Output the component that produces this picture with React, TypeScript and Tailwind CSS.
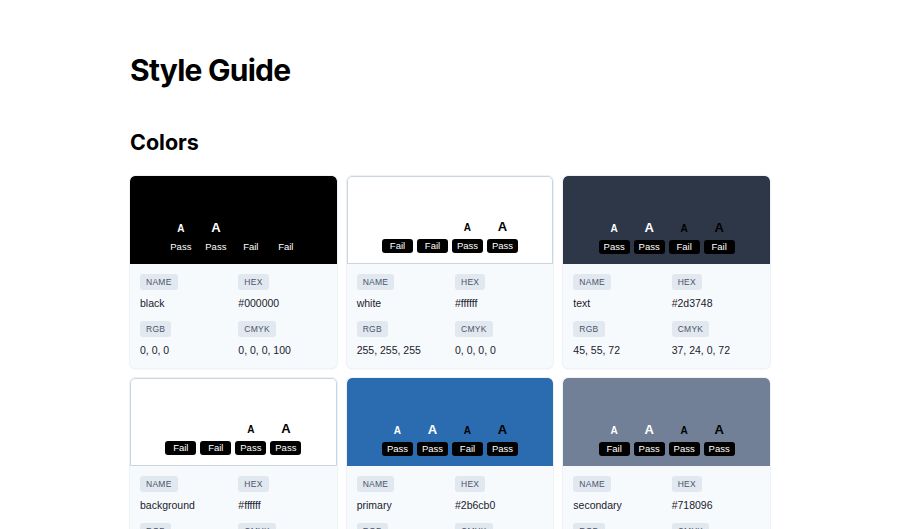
import React from 'react';

interface Swatch {
  name: string;
  hex: string;
  rgb: string;
  cmyk: string;
  results: string[];
}

const colors: Swatch[] = [
  { name: 'black', hex: '#000000', rgb: '0, 0, 0', cmyk: '0, 0, 0, 100', results: ['Pass', 'Pass', 'Fail', 'Fail'] },
  { name: 'white', hex: '#ffffff', rgb: '255, 255, 255', cmyk: '0, 0, 0, 0', results: ['Fail', 'Fail', 'Pass', 'Pass'] },
  { name: 'text', hex: '#2d3748', rgb: '45, 55, 72', cmyk: '37, 24, 0, 72', results: ['Pass', 'Pass', 'Fail', 'Fail'] },
  { name: 'background', hex: '#ffffff', rgb: '255, 255, 255', cmyk: '0, 0, 0, 0', results: ['Fail', 'Fail', 'Pass', 'Pass'] },
  { name: 'primary', hex: '#2b6cb0', rgb: '43, 108, 176', cmyk: '76, 39, 0, 31', results: ['Pass', 'Pass', 'Fail', 'Pass'] },
  { name: 'secondary', hex: '#718096', rgb: '113, 128, 150', cmyk: '25, 15, 0, 41', results: ['Fail', 'Pass', 'Pass', 'Pass'] },
];

// white text small/large, black text small/large
const samples = [
  { color: 'text-white', size: 'text-[10px]' },
  { color: 'text-white', size: 'text-[13px]' },
  { color: 'text-black', size: 'text-[10px]' },
  { color: 'text-black', size: 'text-[13px]' },
];

const Field = ({ label, value }: { label: string; value: string }) => (
  <div className="flex flex-col items-start">
    <span className="rounded-[3px] bg-[#e2e8f0] px-[6px] py-[3px] text-[8.5px] leading-[10px] tracking-[0.03em] text-[#4a5568]">
      {label}
    </span>
    <span className="mt-[6px] text-[10.5px] leading-[14px] text-[#1a202c]">{value}</span>
  </div>
);

const ColorCard = ({ swatch }: { swatch: Swatch }) => {
  const isWhite = swatch.hex === '#ffffff';
  return (
    <div className="overflow-hidden rounded-[5px] bg-[#f7fafc] shadow-[0_1px_2px_rgba(0,0,0,0.08)] ring-1 ring-[#edf2f7]">
      <div
        className={`flex h-[88px] items-end justify-center gap-[4px] rounded-t-[5px] pb-[10px] ${
          isWhite ? 'border border-[#cbd5e0]' : ''
        }`}
        style={{ backgroundColor: swatch.hex }}
      >
        {swatch.results.map((r, i) => (
          <div key={i} className="flex w-[31px] flex-col items-center">
            <span className={`font-bold leading-none ${samples[i].color} ${samples[i].size}`}>A</span>
            <span className="mt-[6px] w-full rounded-[3px] bg-black py-[1px] text-center text-[9.5px] leading-[12px] text-white">
              {r}
            </span>
          </div>
        ))}
      </div>
      <div className="grid grid-cols-2 gap-x-[10px] gap-y-[11px] px-[10px] pb-[11px] pt-[10px]">
        <Field label="NAME" value={swatch.name} />
        <Field label="HEX" value={swatch.hex} />
        <Field label="RGB" value={swatch.rgb} />
        <Field label="CMYK" value={swatch.cmyk} />
      </div>
    </div>
  );
};

export default function App() {
  return (
    <div className="min-h-screen bg-white font-['Liberation_Sans',Arial,sans-serif] text-black">
      <div className="mx-auto max-w-[640px] pb-16 pt-[52px]">
        <h1 className="font-['Inter',sans-serif] text-[30px] font-bold leading-[36px] tracking-tight">Style Guide</h1>
        <h2 className="mt-[40px] font-['Inter',sans-serif] text-[21.5px] font-bold leading-[28px]">Colors</h2>
        <div className="mt-[20px] grid grid-cols-3 gap-[10px]">
          {colors.map(c => (
            <ColorCard key={c.name} swatch={c} />
          ))}
        </div>
      </div>
    </div>
  );
}
